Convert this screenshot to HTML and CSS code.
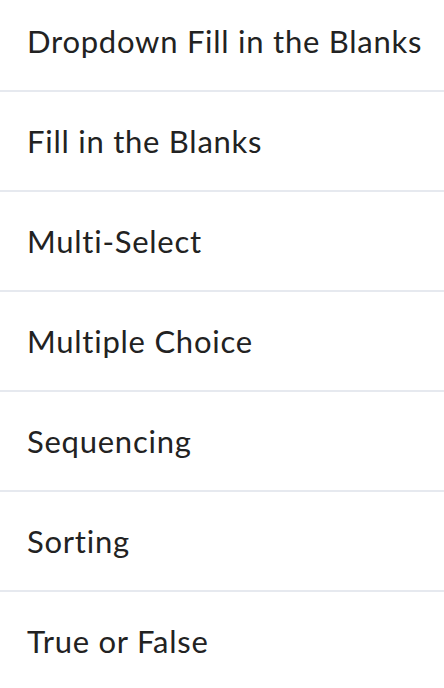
FILE: index.html
```html
<!DOCTYPE html>
<html>
<head>
<meta charset="utf-8">
<link rel="stylesheet" href="styles.css">
</head>
<body>
<ul class="list">
  <li class="item">Dropdown Fill in the Blanks</li>
  <li class="item">Fill in the Blanks</li>
  <li class="item">Multi-Select</li>
  <li class="item">Multiple Choice</li>
  <li class="item">Sequencing</li>
  <li class="item">Sorting</li>
  <li class="item">True or False</li>
</ul>
</body>
</html>
```
FILE: styles.css
```css
html, body {
  margin: 0;
  padding: 0;
  background: #ffffff;
}
.list {
  list-style: none;
  margin: -8px 0 0 0;
  padding: 0;
  font-family: Lato, "Liberation Sans", sans-serif;
}
.item {
  height: 98px;
  display: flex;
  align-items: center;
  padding-left: 27px;
  font-size: 31px;
  letter-spacing: 0.75px;
  font-variant-ligatures: none;
  color: #222222;
  border-bottom: 2px solid #e6e9ef;
  box-sizing: content-box;
}
.item:last-child {
  border-bottom: none;
}
```
